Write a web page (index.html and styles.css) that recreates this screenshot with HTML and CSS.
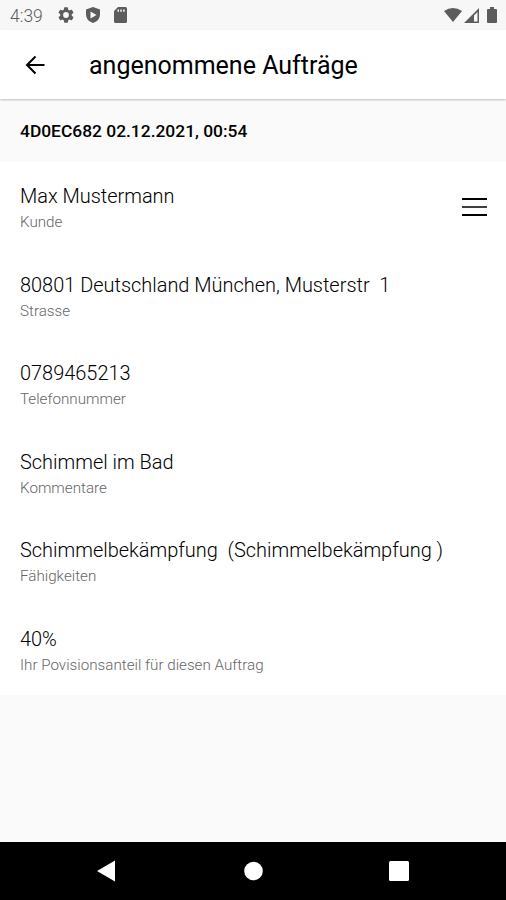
FILE: index.html
```html
<!DOCTYPE html>
<html lang="de">
<head>
    <meta charset="UTF-8">
    <meta name="viewport" content="width=device-width, initial-scale=1.0">
    <title>angenommene Aufträge</title>
    <link rel="stylesheet" href="styles.css">
</head>
<body>
    <div class="status-bar">
        <span class="time">4:39</span>
        <svg class="gear" width="16" height="16" viewBox="2 2 20 20"><path fill="currentColor" d="M19.14 12.94c.04-.3.06-.61.06-.94s-.02-.64-.07-.94l2.03-1.58a.49.49 0 0 0 .12-.61l-1.92-3.32a.49.49 0 0 0-.59-.22l-2.39.96a7 7 0 0 0-1.62-.94l-.36-2.54a.48.48 0 0 0-.48-.41h-3.84a.48.48 0 0 0-.47.41l-.36 2.54c-.59.24-1.13.57-1.62.94l-2.39-.96a.48.48 0 0 0-.59.22L2.74 8.87a.48.48 0 0 0 .12.61l2.03 1.58a6 6 0 0 0 0 1.88l-2.03 1.58a.49.49 0 0 0-.12.61l1.92 3.32c.12.22.37.29.59.22l2.39-.96c.5.38 1.03.7 1.62.94l.36 2.54c.05.24.24.41.48.41h3.84c.24 0 .44-.17.47-.41l.36-2.54a7 7 0 0 0 1.62-.94l2.39.96c.22.08.47 0 .59-.22l1.92-3.32a.48.48 0 0 0-.12-.61zM12 15.6a3.6 3.6 0 1 1 0-7.2 3.6 3.6 0 0 1 0 7.2z"/></svg>
        <svg class="shield" width="14" height="16" viewBox="0 0 14 16"><path fill="currentColor" fill-rule="evenodd" d="M7 0 0 2.500v5Q0 13.500 7 16q7-2.500 7-8.500v-5zM4.500 4.500v7l6-3.500z"/></svg>
        <svg class="sd" width="13" height="16" viewBox="0 0 13 16"><path fill="currentColor" fill-rule="evenodd" d="M4 0h7.500Q13 0 13 1.500v13q0 1.500-1.500 1.500h-10Q0 16 0 14.500V4zM3.500 2.500v2.200H5V2.500zM6.300 2.500v2.200h1.500V2.500zM9.200 2.500v2.200h1.500V2.500z"/></svg>
        <svg class="wifi" width="18" height="14" viewBox="0 0 18 14"><path fill="currentColor" d="M0 3Q9-3 18 3L9 14z"/></svg>
        <svg class="signal" width="15" height="15" viewBox="0 0 15 15"><path fill="currentColor" fill-rule="evenodd" d="M15 0v15H0zM13.500 4 10 7.500v6h3.500z"/></svg>
        <svg class="battery" width="10" height="16" viewBox="0 0 10 16"><path fill="currentColor" d="M3 0h4v2h2q1 0 1 1v12q0 1-1 1H1q-1 0-1-1V3q0-1 1-1h2z"/></svg>
    </div>

    <header class="toolbar">
        <svg class="back" width="20" height="20" viewBox="0 0 20 20"><path fill="none" stroke="currentColor" stroke-width="2" d="M19.500 10H2M10.500 1.500 2 10l8.500 8.500"/></svg>
        <h1>angenommene Aufträge</h1>
    </header>

    <div class="section-title">4D0EC682 02.12.2021, 00:54</div>

    <main class="details">
        <div class="item">
            <div>
                <div class="value">Max Mustermann</div>
                <div class="label">Kunde</div>
            </div>
            <svg class="menu" width="25" height="20" viewBox="0 0 25 20"><path stroke="currentColor" stroke-width="2" d="M0 2h25M0 18h25"/><path stroke="currentColor" stroke-width="2" opacity=".75" d="M0 10h25"/></svg>
        </div>
        <div class="item">
            <div>
                <div class="value">80801 Deutschland München, Musterstr&nbsp; 1</div>
                <div class="label">Strasse</div>
            </div>
        </div>
        <div class="item">
            <div>
                <div class="value">0789465213</div>
                <div class="label">Telefonnummer</div>
            </div>
        </div>
        <div class="item">
            <div>
                <div class="value">Schimmel im Bad</div>
                <div class="label">Kommentare</div>
            </div>
        </div>
        <div class="item">
            <div>
                <div class="value">Schimmelbekämpfung&nbsp; (Schimmelbekämpfung )</div>
                <div class="label">Fähigkeiten</div>
            </div>
        </div>
        <div class="item">
            <div>
                <div class="value">40%</div>
                <div class="label">Ihr Povisionsanteil für diesen Auftrag</div>
            </div>
        </div>
    </main>

    <nav class="nav-bar">
        <svg width="20" height="22" viewBox="0 0 20 22"><path fill="currentColor" d="M19 .5v21L1 11z"/></svg>
        <svg width="20" height="20" viewBox="0 0 20 20"><circle fill="currentColor" cx="10.500" cy="10" r="9.300"/></svg>
        <svg width="20" height="20" viewBox="0 0 20 20"><rect fill="currentColor" width="20" height="20" rx="1.500"/></svg>
    </nav>
</body>
</html>
```

FILE: styles.css
```css
* {
    box-sizing: border-box;
}

body {
    margin: 0;
    height: 900px;
    display: flex;
    flex-direction: column;
    font-family: Roboto, sans-serif;
    background-color: #fafafa;
    color: #000;
    overflow: hidden;
}

svg {
    display: block;
    flex: none;
}

.status-bar {
    height: 30px;
    display: flex;
    align-items: center;
    padding: 0 9px 0 10px;
    background-color: #f7f7f7;
    color: #5c5c5c;
}

.time {
    width: 48px;
    padding-top: 1px;
    font-size: 17.5px;
    font-weight: 300;
}

.shield {
    margin-left: 12px;
}

.sd {
    margin-left: 14px;
}

.wifi {
    margin-left: auto;
}

.signal {
    margin-left: 2px;
}

.battery {
    margin-left: 8px;
}

.toolbar {
    height: 69px;
    display: flex;
    align-items: center;
    padding-left: 25px;
    background-color: #fff;
    box-shadow: 0 1px 2px rgba(0, 0, 0, 0.25);
    z-index: 1;
}

h1 {
    margin: 1px 0 0 44px;
    font-size: 25px;
    font-weight: 400;
}

.section-title {
    height: 63px;
    padding: 21px 20px 0;
    font-size: 17.400px;
    line-height: 22px;
    font-weight: 500;
}

.details {
    padding-bottom: 2px;
    background-color: #fff;
}

.item {
    height: 88.550px;
    display: flex;
    justify-content: space-between;
    align-items: center;
    padding: 1.500px 19px 0 20px;
}

.value {
    padding-top: 2px;
    font-size: 19.950px;
    line-height: 28px;
    font-weight: 300;
}

.label {
    font-size: 15.200px;
    line-height: 24px;
    font-weight: 300;
    color: #666;
}

.nav-bar {
    height: 58px;
    margin-top: auto;
    display: flex;
    justify-content: space-between;
    align-items: center;
    padding: 0 97px 0 96px;
    background-color: #000;
    color: #fff;
}
```
